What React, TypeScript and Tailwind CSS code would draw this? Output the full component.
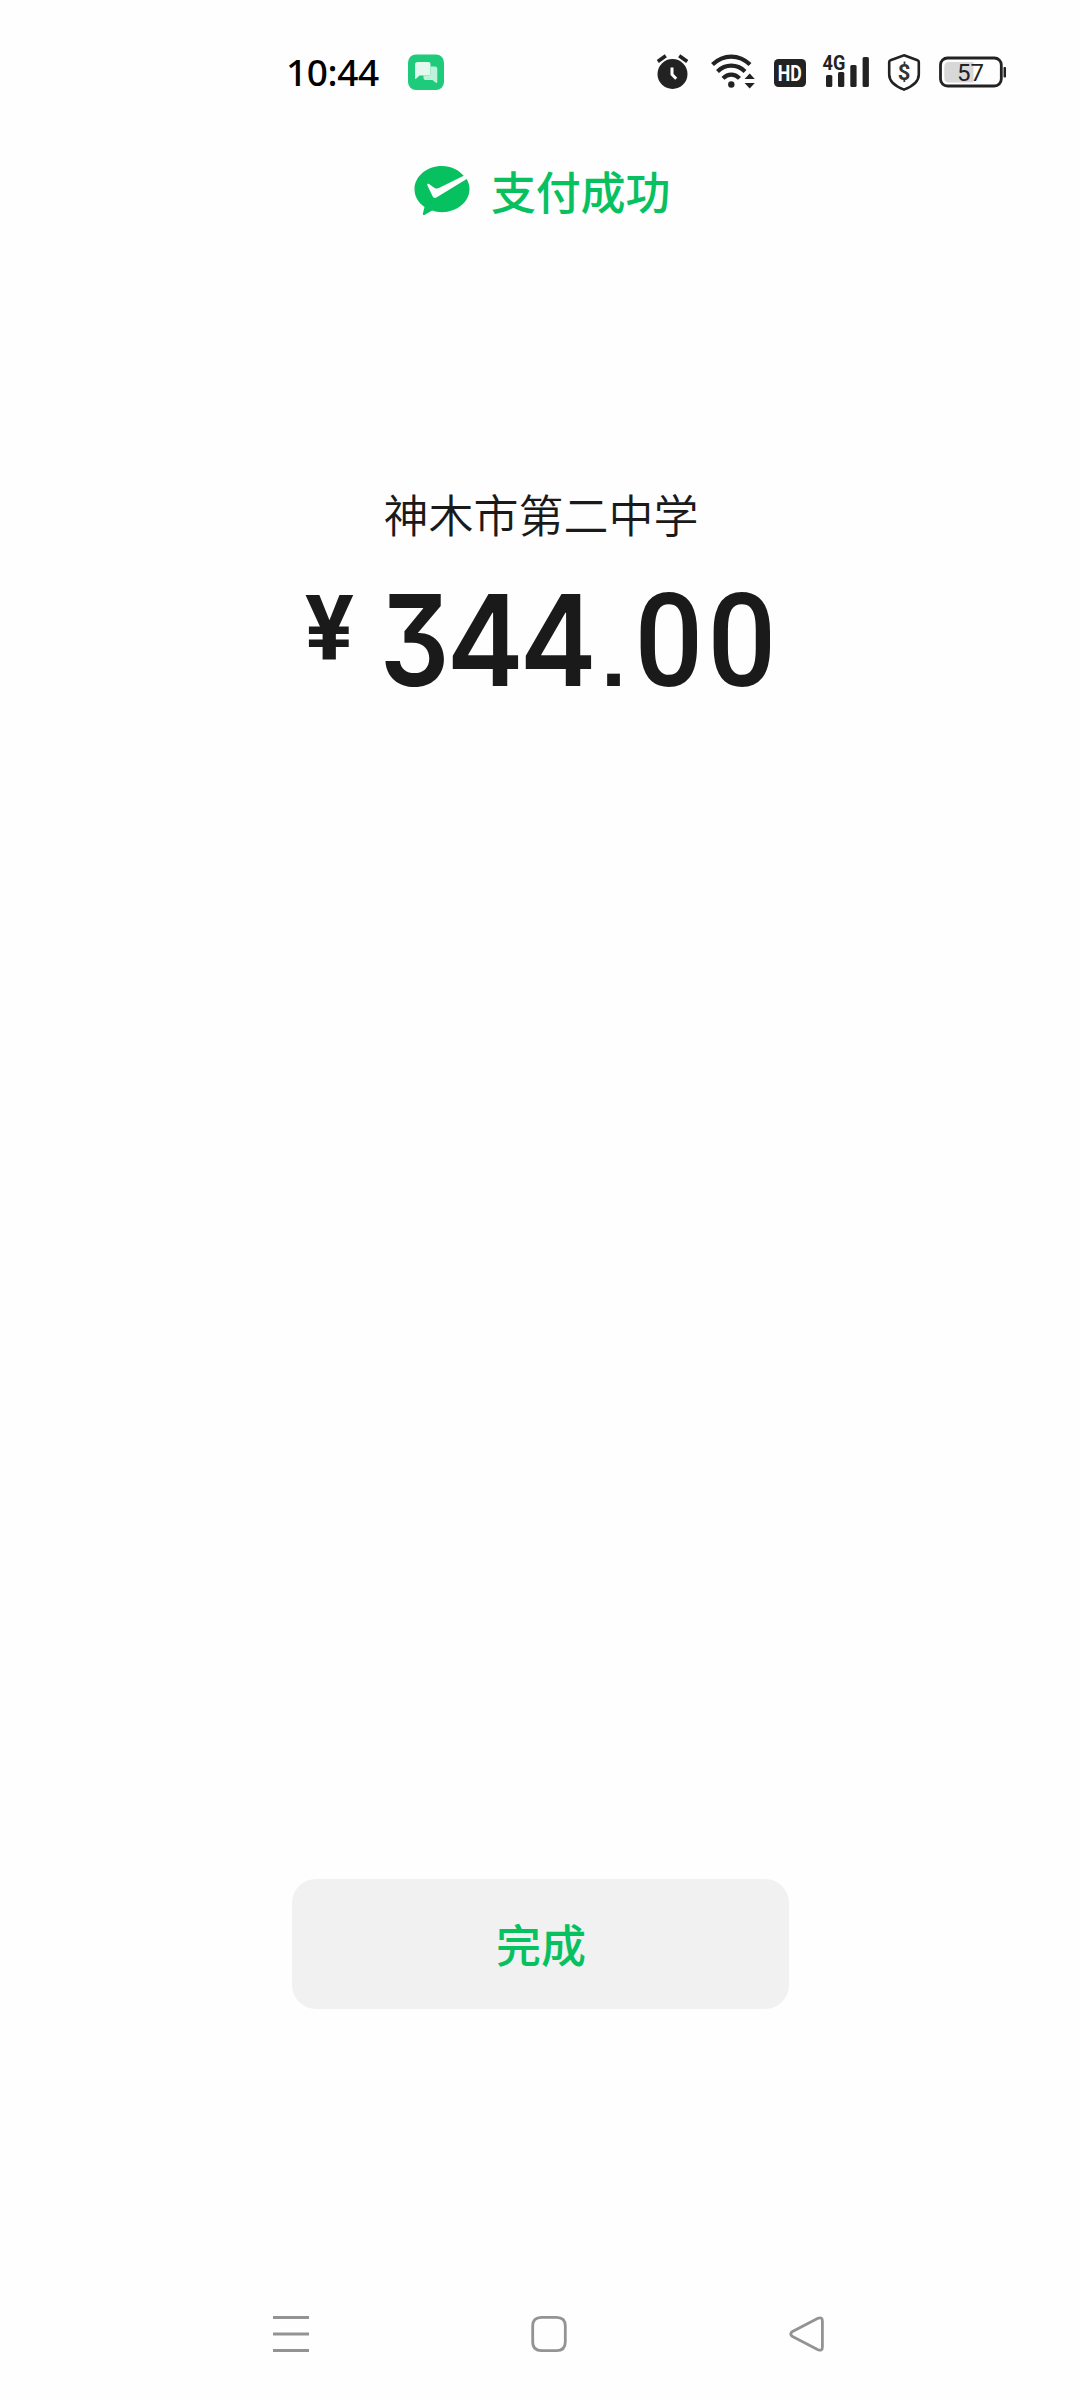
function AppBadge() {
  return (
    <svg width="36" height="40" viewBox="0 0 36 40">
      <rect y="2.5" width="36" height="35.5" rx="8" fill="#1ecb7b" />
      <path d="M7 12.5q0-2.5 2.500-2.500h11q2 0 2 2v9.500q0 2-2 2h-9l-3.500 3.200q-1 .6-1-.8z" fill="#e3f9ee" />
      <path d="M22.500 14.500h4.500q2.300 0 2.300 2.300v12.700q0 2.300-1.800 1l-3-2.500h-7q-2 0-2-2v-2.500h5q2 0 2-2z" fill="#bff2da" />
    </svg>
  );
}

function AlarmIcon() {
  return (
    <svg width="32" height="40" viewBox="0 0 32 40">
      <circle cx="16.500" cy="22" r="15" fill="#222" />
      <path d="M1.800 9.500 9.800 3.700M31.200 9.500 23.200 3.700" stroke="#222" strokeWidth="3.600" />
      <path d="M16 15.500v7l4.200 4.200" fill="none" stroke="#fff" strokeWidth="3" />
    </svg>
  );
}

function WifiIcon() {
  return (
    <svg width="44" height="40" viewBox="0 0 44 40">
      <g fill="none" stroke="#222" strokeWidth="4.200">
        <path d="M1.500 12.500C12.500 1.900 28 1.900 39 12.500" />
        <path d="M6.500 19.400C14.500 11.700 26 11.700 34 19.400" />
        <path d="M12 26.400C17 21.300 23.500 21.300 28.500 26.400" />
      </g>
      <circle cx="20.300" cy="32.500" r="3.200" fill="#222" />
      <path d="m33.600 27 5.100-5.500 5.100 5.500zM33.600 31l5.100 5.500 5.100-5.500z" fill="#222" />
    </svg>
  );
}

function HdIcon() {
  return (
    <svg width="32" height="40" viewBox="0 0 32 40">
      <rect y="7" width="32" height="28" rx="4.500" fill="#222" />
      <text x="15.800" y="28.800" textAnchor="middle" textLength="24" lengthAdjust="spacingAndGlyphs" fontFamily="Roboto, sans-serif" fontWeight="700" fontSize="22" fill="#fff">
        HD
      </text>
    </svg>
  );
}

function SignalIcon() {
  return (
    <svg width="48" height="40" viewBox="0 0 48 40">
      <g fill="#222">
        <rect x="4" y="23" width="6.300" height="12" rx="1.500" />
        <rect x="16" y="20" width="6.300" height="15" rx="1.500" />
        <rect x="28.300" y="13" width="6.300" height="22" rx="1.500" />
        <rect x="40.600" y="5" width="6.300" height="30" rx="1.500" />
      </g>
      <text x=".6" y="17.700" textLength="22.800" lengthAdjust="spacingAndGlyphs" fontFamily="Roboto, sans-serif" fontWeight="700" fontSize="20" fill="#222">
        4G
      </text>
    </svg>
  );
}

function ShieldIcon() {
  return (
    <svg width="34" height="40" viewBox="0 0 34 40">
      <path
        d="M17 3.300 30.500 8.200q1.300.5 1.300 1.900v12.400c0 7-6 11.800-14.800 15.100C8.200 34.300 2.200 29.500 2.200 22.500V10.100q0-1.400 1.300-1.900z"
        fill="none"
        stroke="#222"
        strokeWidth="2.600"
      />
      <text x="17" y="27.600" textAnchor="middle" fontFamily="Roboto, sans-serif" fontWeight="700" fontSize="22" fill="#333">
        $
      </text>
    </svg>
  );
}

function BatteryIcon() {
  return (
    <svg width="68" height="40" viewBox="0 0 68 40">
      <path d="M10 10h24.500v20.500H10q-4.700 0-4.700-5v-10.500q0-5 4.700-5z" fill="#d8d8d8" />
      <rect x="1.500" y="6" width="60.800" height="28" rx="7" fill="none" stroke="#222" strokeWidth="2.800" />
      <rect x="64.500" y="15" width="2.500" height="10.500" rx=".8" fill="#222" />
      <text x="31.500" y="29" textAnchor="middle" textLength="27" lengthAdjust="spacingAndGlyphs" fontFamily="Roboto, sans-serif" fontSize="24.500" fill="#222">
        57
      </text>
    </svg>
  );
}

function StatusBar() {
  return (
    <header className="mt-[52px] flex h-10 items-center pr-[73px] pl-[286px]">
      <span className="w-[122px] font-['Noto_Sans',sans-serif] text-[37px] leading-10 font-[460] tracking-[-0.4px] text-black">
        10:44
      </span>
      <AppBadge />
      <div className="ml-auto flex items-center">
        <AlarmIcon />
        <div className="ml-[23px]"><WifiIcon /></div>
        <div className="ml-[19px]"><HdIcon /></div>
        <div className="ml-4"><SignalIcon /></div>
        <div className="ml-[17px]"><ShieldIcon /></div>
        <div className="ml-[18px]"><BatteryIcon /></div>
      </div>
    </header>
  );
}

function PayLogo() {
  return (
    <svg width="56" height="50" viewBox="0 0 56 50">
      <path
        d="M28 0C12.800 0 .5 10.300.5 23.200c0 7.200 3.900 13.600 10 17.800L8.900 47.500c-.3 1.300.8 2 1.900 1.300l7.400-4.300c3.100 1.100 6.400 1.700 9.800 1.700 15.200 0 27.500-10.300 27.500-23.100 0-3.700-1-7.100-2.800-10.200L22.800 31.200c-2 1.300-3.400.7-4.300-1.200l-5.100-10.600c-.6-1.500.6-2.100 1.600-1.400l5.200 3.700c1.500 1 2.900 1.200 4.600.4L49.700 9.800C44.700 3.900 36.900 0 28 0z"
        fill="#07c160"
      />
    </svg>
  );
}

const amountCells: { char: string; cell: string; glyph: string }[] = [
  { char: '3', cell: 'w-[73px] pl-[3px]', glyph: "scale-x-[0.86] font-[Inter,sans-serif] font-semibold [font-feature-settings:'cv09']" },
  { char: '4', cell: 'w-[73px]', glyph: 'scale-x-[0.91] font-[Inter,sans-serif] font-semibold' },
  { char: '4', cell: 'w-[73px]', glyph: 'scale-x-[0.91] font-[Inter,sans-serif] font-semibold' },
  { char: '.', cell: 'w-[37px]', glyph: "font-[Inter,sans-serif] text-[88px] font-semibold [font-feature-settings:'ss07']" },
  { char: '0', cell: 'w-[73px]', glyph: 'scale-x-[0.93] font-[Roboto,sans-serif] text-[130px] font-medium' },
  { char: '0', cell: 'w-[73px]', glyph: 'scale-x-[0.93] font-[Roboto,sans-serif] text-[130px] font-medium' },
];

function Amount() {
  return (
    <div className="mt-8 ml-[305px] flex h-[128px] items-start self-start whitespace-nowrap">
      <span className="mt-px w-[71px] shrink-0 font-[Roboto,sans-serif] text-[91px] leading-[105px] font-bold">¥</span>
      <div className="flex items-baseline text-[127px] leading-[128px]">
        {amountCells.map(({ char, cell, glyph }, i) => (
          <span key={i} className={`flex justify-center ${cell}`}>
            <span className={glyph}>{char}</span>
          </span>
        ))}
      </div>
    </div>
  );
}

function NavigationBar() {
  return (
    <nav className="mb-[48px] ml-[272px] flex h-[36px] w-[553px] items-center justify-between">
      <svg width="38" height="36" viewBox="0 0 38 36" stroke="#939393" strokeWidth="3">
        <path d="M1 1.500h36M1 18h36M1 34.500h36" />
      </svg>
      <svg width="38" height="36" viewBox="0 0 38 36" fill="none" stroke="#939393" strokeWidth="2.800">
        <path d="M11.500 1.400h15q8.800 0 8.800 8.600v16q0 8.600-8.800 8.600h-15q-8.800 0-8.800-8.600v-16q0-8.600 8.800-8.600z" />
      </svg>
      <svg width="38" height="36" viewBox="0 0 38 36" fill="none" stroke="#939393" strokeWidth="2.800" strokeLinejoin="round">
        <path d="M31 2.300q4.400-1.800 4.400 2.800v25.800q0 4.600-4.400 2.800L5.500 20.500q-3.600-2.500 0-5z" />
      </svg>
    </nav>
  );
}

export default function App() {
  return (
    <div className="flex h-[2400px] w-[1080px] flex-col bg-[#fefefe] font-['Noto_Sans_CJK_SC',sans-serif] text-[#1a1a1a]">
      <StatusBar />

      <div className="mt-[69px] ml-[414px] flex h-[60px] items-center gap-[21px] text-[#07c160]">
        <PayLogo />
        <span className="text-[45px] leading-[60px] font-medium tracking-[-0.2px]">支付成功</span>
      </div>

      <main className="mt-[263px] flex flex-col">
        <p className="pl-[2px] text-center text-[45px] leading-[60px] font-[350]">神木市第二中学</p>
        <Amount />
      </main>

      <button className="mt-auto ml-[292px] h-[130px] w-[497px] rounded-[24px] bg-[#f1f1f1] pl-px text-[45px] font-medium text-[#07c160]">
        完成
      </button>
      <div className="h-[307px]" />
      <NavigationBar />
    </div>
  );
}
